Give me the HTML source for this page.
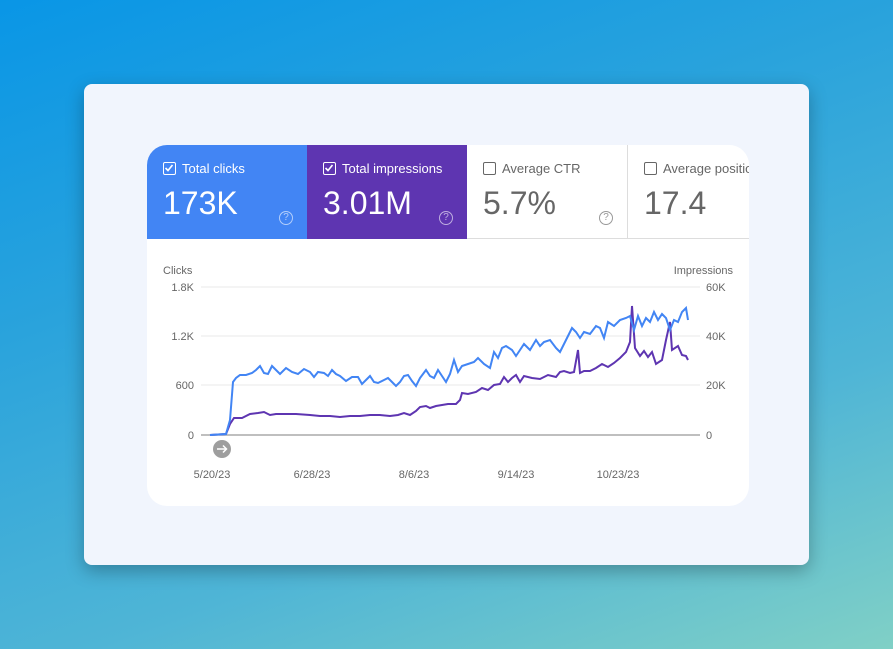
<!DOCTYPE html>
<html><head><meta charset="utf-8"><style>
*{margin:0;padding:0;box-sizing:border-box}
body{width:893px;height:649px;overflow:hidden;position:relative;font-family:"Liberation Sans",sans-serif;
background:linear-gradient(160deg,#0996e6 0%,#2aa3dc 35%,#4fb5d6 70%,#80d0c6 100%);}
.card{position:absolute;left:84px;top:84px;width:725px;height:481px;background:#f1f5fd;border-radius:8px;box-shadow:0 6px 18px rgba(0,0,0,.28)}
.inner{position:absolute;left:147px;top:145px;width:602px;height:361px;background:#fff;border-radius:20px;overflow:hidden}
.tile{position:absolute;top:0;height:94px;width:160px}
.lab{position:absolute;left:16px;top:16px;font-size:13px;display:flex;align-items:center}
.cb{width:13px;height:13px;border:1.5px solid #fff;border-radius:2px;margin-right:6px;position:relative}
.val{position:absolute;left:16px;top:40px;font-size:32px}
.q{position:absolute;left:132px;top:66px;width:14px;height:14px;border:1.2px solid;border-radius:50%;font-size:10px;text-align:center;line-height:12px}
svg text{font-family:"Liberation Sans",sans-serif;font-size:11px;fill:#666}
</style></head><body>
<div class="card"></div>
<div class="inner">
 <div class="tile" style="left:0;background:#4285f4;color:#fff">
  <div class="lab"><div class="cb"><svg width="10" height="10" style="position:absolute;left:0;top:0"><path d="M1.5 5 L4 7.5 L8.5 2" stroke="#fff" stroke-width="1.6" fill="none"/></svg></div>Total clicks</div>
  <div class="val">173K</div><div class="q" style="color:rgba(255,255,255,.6)">?</div></div>
 <div class="tile" style="left:160px;background:#5e35b1;color:#fff">
  <div class="lab"><div class="cb"><svg width="10" height="10" style="position:absolute;left:0;top:0"><path d="M1.5 5 L4 7.5 L8.5 2" stroke="#fff" stroke-width="1.6" fill="none"/></svg></div>Total impressions</div>
  <div class="val">3.01M</div><div class="q" style="color:rgba(255,255,255,.6)">?</div></div>
 <div class="tile" style="left:320px;background:#fff;color:#666;border-bottom:1px solid #ddd">
  <div class="lab"><div class="cb" style="border-color:#666"></div>Average CTR</div>
  <div class="val">5.7%</div><div class="q" style="color:#999">?</div></div>
 <div class="tile" style="left:480px;width:122px;background:#fff;color:#666;border-left:1px solid #ddd;border-bottom:1px solid #ddd;white-space:nowrap">
  <div class="lab"><div class="cb" style="border-color:#666"></div>Average position</div>
  <div class="val">17.4</div></div>
</div>
<svg width="893" height="649" style="position:absolute;left:0;top:0">
<text x="163" y="274">Clicks</text>
<text x="733" y="274" text-anchor="end">Impressions</text>
<g stroke="#e8e8e8" stroke-width="1"><line x1="201" y1="287" x2="700" y2="287"/><line x1="201" y1="336" x2="700" y2="336"/><line x1="201" y1="385" x2="700" y2="385"/></g>
<line x1="201" y1="435" x2="700" y2="435" stroke="#aaa" stroke-width="1.5"/>
<g text-anchor="end"><text x="194" y="291">1.8K</text><text x="194" y="340">1.2K</text><text x="194" y="389">600</text><text x="194" y="439">0</text></g>
<text x="706" y="291">60K</text><text x="706" y="340">40K</text><text x="706" y="389">20K</text><text x="706" y="439">0</text>
<g text-anchor="middle"><text x="212" y="478">5/20/23</text><text x="312" y="478">6/28/23</text><text x="414" y="478">8/6/23</text><text x="516" y="478">9/14/23</text><text x="618" y="478">10/23/23</text></g>
<circle cx="222" cy="449" r="9" fill="#9e9e9e"/><path d="M217 449 H226 M223 445.5 L226.5 449 L223 452.5" stroke="#fff" stroke-width="1.5" fill="none"/>
<polyline fill="none" stroke="#5e35b1" stroke-width="2" points="210,435 226,434 230,424 234,418 242,418 250,414 258,413 264,412 270,415 276,414 284,414 296,414 310,415 320,416 330,416 340,417 350,416 360,416 370,415 380,415 390,416 398,415 404,413 410,415 416,411 420,407 426,406 430,408 436,406 442,405 448,404 456,404 460,400 462,393 468,394 476,392 482,388 488,390 494,385 500,384 504,377 508,382 512,378 516,375 520,382 524,376 532,378 540,379 548,375 556,377 560,372 564,371 570,373 574,372 578,350 580,373 584,371 590,371 596,368 602,364 608,367 614,363 620,358 626,352 630,342 632,306 635,348 640,356 644,351 648,357 652,352 656,364 662,360 666,340 670,322 672,350 678,346 682,355 686,356 688,360"/>
<polyline fill="none" stroke="#4285f4" stroke-width="2" points="210,435 226,434 230,420 233,382 236,378 240,375 246,375 252,373 256,370 260,366 264,373 268,374 272,366 276,370 280,374 286,368 292,372 298,374 304,369 310,372 314,377 318,372 324,373 328,376 332,370 336,374 340,376 346,381 352,377 358,377 362,384 366,380 370,376 374,382 378,383 384,380 388,378 392,382 396,386 400,382 404,376 408,375 412,381 416,386 420,378 426,370 430,376 434,378 438,370 442,376 446,382 450,374 454,360 458,372 462,366 468,364 474,362 478,358 484,364 490,368 494,352 498,358 502,348 506,346 512,350 516,356 520,350 524,344 530,350 536,340 540,346 544,342 550,340 556,348 560,352 566,340 572,328 576,332 580,338 584,332 590,334 596,326 600,328 604,338 608,322 614,326 620,320 626,318 630,316 634,330 638,316 642,326 646,318 650,322 654,312 658,320 662,314 666,318 670,330 674,320 678,322 682,312 686,308 688,320"/>
</svg>
</body></html>
